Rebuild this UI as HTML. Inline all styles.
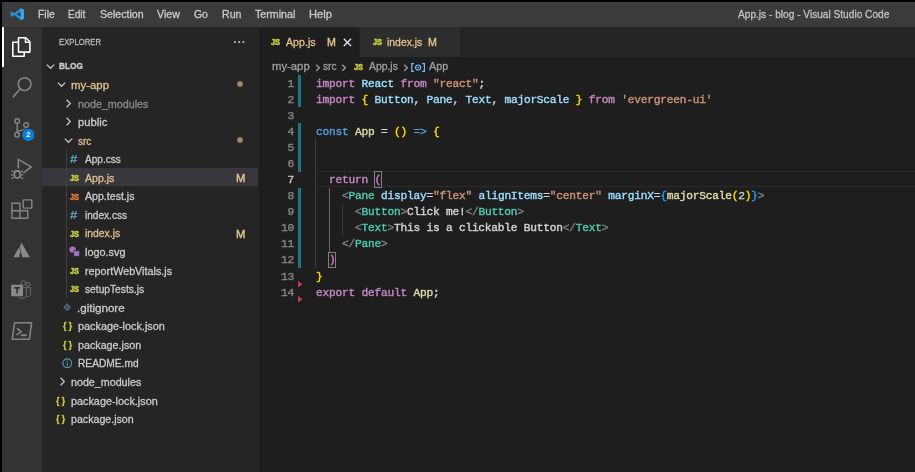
<!DOCTYPE html><html><head><meta charset="utf-8"><title>App.js - blog - Visual Studio Code</title><style>
*{box-sizing:border-box;margin:0;padding:0}
html,body{width:915px;height:472px;overflow:hidden;background:#000}
body{position:relative;font-family:"Liberation Sans",sans-serif;color:#ccc;font-size:11px}
.abs{position:absolute}
#w{position:absolute;left:0;top:0;width:915px;height:472px;will-change:transform}
#title{left:2px;top:2px;width:913px;height:24.5px;background:#3b3b3b}
#act{left:2px;top:26.5px;width:40.3px;height:446px;background:#333}
#side{left:42.3px;top:26.5px;width:216.4px;height:446px;background:#252526}
#ed{left:258.7px;top:26.5px;width:657px;height:446px;background:#1e1e1e}
#tabs{left:258.7px;top:26.5px;width:657px;height:30px;background:#252526}
.t{position:absolute;white-space:pre;transform-origin:0 50%}
.code,.ln{font-family:"Liberation Mono",monospace;font-size:11.2px;letter-spacing:-0.22px;white-space:pre;position:absolute;line-height:12px;-webkit-text-stroke:0.4px}
.code{color:#d4d4d4}
.ln{color:#858585;text-align:right;width:30px}
.k{color:#c586c0}.c{color:#569cd6}.v{color:#9cdcfe}.f{color:#dcdcaa}.s{color:#ce9178}
.b1{color:#ffd700}.b2{color:#da70d6}.b3{color:#179fff}.g{color:#808080}.tg{color:#4ec9b0}.n{color:#b5cea8}
</style></head><body><div id="w">
<div class="abs" id="title"></div><div class="abs" id="act"></div><div class="abs" id="side"></div><div class="abs" id="ed"></div><div class="abs" id="tabs"></div>
<svg class="abs" style="left:9.5px;top:7.8px" width="14.5" height="12.4" viewBox="0 0 100 100" preserveAspectRatio="none"><path d="M74 3 L96 14 V86 L74 97 L30 57 L12 71 L4 66 V34 L12 29 L30 43 Z M74 30 L44 50 L74 70 Z" fill="#2793dd" fill-rule="evenodd"/><path d="M74 3 L96 14 V86 L74 97 Z" fill="#36a6ee"/></svg>
<div class="t" style="left:37.80px;top:8.18px;font-size:11.6px;line-height:11.6px;color:#cdcdcd;transform:scaleX(0.8940);-webkit-text-stroke:0.3px;">File</div>
<div class="t" style="left:67.90px;top:8.18px;font-size:11.6px;line-height:11.6px;color:#cdcdcd;transform:scaleX(0.8720);-webkit-text-stroke:0.3px;">Edit</div>
<div class="t" style="left:100.00px;top:8.18px;font-size:11.6px;line-height:11.6px;color:#cdcdcd;transform:scaleX(0.9144);-webkit-text-stroke:0.3px;">Selection</div>
<div class="t" style="left:157.30px;top:8.18px;font-size:11.6px;line-height:11.6px;color:#cdcdcd;transform:scaleX(0.9160);-webkit-text-stroke:0.3px;">View</div>
<div class="t" style="left:194.20px;top:8.18px;font-size:11.6px;line-height:11.6px;color:#cdcdcd;transform:scaleX(0.8989);-webkit-text-stroke:0.3px;">Go</div>
<div class="t" style="left:221.60px;top:8.18px;font-size:11.6px;line-height:11.6px;color:#cdcdcd;transform:scaleX(0.9174);-webkit-text-stroke:0.3px;">Run</div>
<div class="t" style="left:254.90px;top:8.18px;font-size:11.6px;line-height:11.6px;color:#cdcdcd;transform:scaleX(0.9206);-webkit-text-stroke:0.3px;">Terminal</div>
<div class="t" style="left:308.80px;top:8.18px;font-size:11.6px;line-height:11.6px;color:#cdcdcd;transform:scaleX(0.9617);-webkit-text-stroke:0.3px;">Help</div>
<div class="t" style="left:737.50px;top:8.18px;font-size:11.6px;line-height:11.6px;color:#c4c4c4;transform:scaleX(0.8738);-webkit-text-stroke:0.3px;">App.js - blog - Visual Studio Code</div>
<div class="abs" style="left:2px;top:26.5px;width:1.7px;height:40.3px;background:#fff"></div>
<svg class="abs" style="left:2px;top:26px" width="41" height="330" viewBox="2 26 41 330" fill="none" stroke-linejoin="round" stroke-linecap="round">
<g stroke="#ffffff" stroke-width="1.55">
<path d="M18.5 50 V37.7 H25.8 L29.9 41.8 V52.1 H18.5 Z"/>
<path d="M25.4 38 V42.3 H29.6" stroke-width="1.4"/>
<path d="M18 42.2 H12.8 V56.2 H24.2 V52.6"/>
</g>
<g stroke="#868686" stroke-width="1.6">
<circle cx="24.6" cy="84.1" r="6.4"/>
<path d="M19.9 89.2 L13.3 96.8"/>
</g>
<g stroke="#868686" stroke-width="1.4">
<circle cx="17.2" cy="121.1" r="2.3"/>
<circle cx="26.1" cy="124.9" r="2.3"/>
<circle cx="17.1" cy="134.8" r="2.3"/>
<path d="M17.2 123.6 V132.3 M26.1 127.4 C26.1 130.4 21 130.2 17.3 131.2"/>
</g>
<circle cx="28.4" cy="134.9" r="6.6" fill="#0a7fd6" stroke="#2b2b2b" stroke-width="0.8"/>
<g stroke="#868686" stroke-width="1.5">
<path d="M18.3 168 V159.3 L31.3 166.9 L23.8 172.6"/>
</g>
<g stroke="#868686" stroke-width="1.2">
<ellipse cx="17.2" cy="174.5" rx="2.8" ry="3.6" stroke-width="1.6"/>
<path d="M14.2 172.6 L11.8 171 M14 174.8 H11.4 M14.2 177 L11.8 178.6 M20.2 172.6 L22.6 171 M20.4 174.8 H23 M20.2 177 L22.6 178.6 M15.2 170.6 L19.2 170.6"/>
</g>
<g stroke="#868686" stroke-width="1.4">
<path d="M11.9 203.3 H19.9 V218.3 H11.9 Z M11.9 210.8 H27.7 V218.3 H19.9"/>
<rect x="23.2" y="199.9" width="8.6" height="8.2" rx="0.8"/>
</g>
<g fill="#8a8a8a" stroke="none">
<path d="M13.4 257.3 L19.0 247.2 L20.4 251.6 L19.2 257.3 Z"/>
<path d="M21.4 242.4 L29.9 257.3 L22.3 257.3 L19.8 247.0 Z"/>
</g>
<g>
<rect x="11.2" y="284.8" width="11.8" height="11.4" rx="0.8" fill="#8a8a8a"/>
<path d="M14.2 287.8 H20 M17.1 287.8 V293.6" stroke="#333333" stroke-width="1.7" stroke-linecap="butt"/>
<g stroke="#6e6e6e" stroke-width="1">
<circle cx="23.4" cy="283" r="2.4"/>
<circle cx="28" cy="284.4" r="1.9"/>
<path d="M23.6 287.6 H26.4 V294.6 C26.4 298.4 21.4 299.6 19 297"/>
<path d="M27 287.6 H30.6 V293.4 C30.6 296.4 28 297 26.6 296.4"/>
</g>
</g>
<g stroke="#868686" stroke-width="1.5">
<path d="M14.6 322.8 H31.6 L29.4 339.2 H12.2 Z"/>
<path d="M17.4 328.6 L21.2 331.6 L17 334.6"/>
<path d="M21.6 335.2 H26" stroke-width="1.9"/>
</g>
</svg>
<div class="t" style="left:26.3px;top:131.2px;font-size:7.6px;line-height:7.6px;font-weight:bold;color:#fff">2</div>

<div class="t" style="left:58.90px;top:36.94px;font-size:9.4px;line-height:9.4px;color:#bbbbbb;transform:scaleX(0.8247);-webkit-text-stroke:0.3px;">EXPLORER</div>
<div class="abs" style="left:233.5px;top:40.8px;width:2px;height:2px;border-radius:50%;background:#c5c5c5;box-shadow:4.2px 0 0 #c5c5c5,8.4px 0 0 #c5c5c5"></div>
<svg class="abs" style="left:46.00px;top:61.80px" width="9" height="9" viewBox="0 0 9 9"><path d="M0.8 2.6 L4.5 6.3 L8.2 2.6" fill="none" stroke="#c5c5c5" stroke-width="1.30"/></svg>
<div class="t" style="left:58.90px;top:61.19px;font-size:9.7px;line-height:9.7px;color:#cccccc;transform:scaleX(0.8598);font-weight:bold;-webkit-text-stroke:0.3px;">BLOG</div>
<div class="abs" style="left:42.3px;top:167.81px;width:216px;height:18.57px;background:#37373d"></div>
<div class="abs" style="left:66.1px;top:149.50px;width:1px;height:148.56px;background:#404041"></div>
<div class="t" style="left:71.10px;top:79.93px;font-size:11.3px;line-height:11.3px;color:#e2c08d;transform:scaleX(1.0084);-webkit-text-stroke:0.3px;">my-app</div>
<svg class="abs" style="left:57.00px;top:80.40px" width="9" height="9" viewBox="0 0 9 9"><path d="M0.8 2.6 L4.5 6.3 L8.2 2.6" fill="none" stroke="#c5c5c5" stroke-width="1.30"/></svg>
<div class="abs" style="left:237.1px;top:80.90px;width:6.2px;height:6.2px;border-radius:50%;background:radial-gradient(#a8946f 30%,#85745a 75%)"></div>
<div class="t" style="left:77.60px;top:98.50px;font-size:11.3px;line-height:11.3px;color:#8c8c8c;transform:scaleX(0.9508);-webkit-text-stroke:0.3px;">node_modules</div>
<svg class="abs" style="left:64.10px;top:98.87px" width="9" height="9" viewBox="0 0 9 9"><path d="M2.6 0.8 L6.3 4.5 L2.6 8.2" fill="none" stroke="#c5c5c5" stroke-width="1.30"/></svg>
<div class="t" style="left:77.60px;top:117.07px;font-size:11.3px;line-height:11.3px;color:#cccccc;transform:scaleX(0.9944);-webkit-text-stroke:0.3px;">public</div>
<svg class="abs" style="left:64.10px;top:117.44px" width="9" height="9" viewBox="0 0 9 9"><path d="M2.6 0.8 L6.3 4.5 L2.6 8.2" fill="none" stroke="#c5c5c5" stroke-width="1.30"/></svg>
<div class="t" style="left:77.60px;top:135.64px;font-size:11.3px;line-height:11.3px;color:#e2c08d;transform:scaleX(0.8825);-webkit-text-stroke:0.3px;">src</div>
<svg class="abs" style="left:63.50px;top:136.11px" width="9" height="9" viewBox="0 0 9 9"><path d="M0.8 2.6 L4.5 6.3 L8.2 2.6" fill="none" stroke="#c5c5c5" stroke-width="1.30"/></svg>
<div class="abs" style="left:237.1px;top:136.61px;width:6.2px;height:6.2px;border-radius:50%;background:radial-gradient(#a8946f 30%,#85745a 75%)"></div>
<div class="t" style="left:84.60px;top:154.21px;font-size:11.3px;line-height:11.3px;color:#cccccc;transform:scaleX(0.8930);-webkit-text-stroke:0.3px;">App.css</div>
<div class="t" style="left:70.00px;top:154.29px;font-size:10.5px;line-height:10.5px;color:#519aba;transform:scaleX(1.2667);font-weight:bold;-webkit-text-stroke:0.2px;">#</div>
<div class="t" style="left:84.60px;top:172.78px;font-size:11.3px;line-height:11.3px;color:#e2c08d;transform:scaleX(0.9355);-webkit-text-stroke:0.3px;">App.js</div>
<div class="t" style="left:69.60px;top:173.05px;font-size:9.8px;line-height:9.8px;color:#cbcb41;transform:scaleX(0.7551);font-weight:bold;-webkit-text-stroke:0.6px;">JS</div>
<div class="t" style="left:236.20px;top:173.04px;font-size:11px;line-height:11px;color:#e2c08d;transform:scaleX(1.0222);-webkit-text-stroke:0.45px;">M</div>
<div class="t" style="left:84.60px;top:191.35px;font-size:11.3px;line-height:11.3px;color:#cccccc;transform:scaleX(0.9379);-webkit-text-stroke:0.3px;">App.test.js</div>
<div class="t" style="left:69.60px;top:191.62px;font-size:9.8px;line-height:9.8px;color:#e37933;transform:scaleX(0.7551);font-weight:bold;-webkit-text-stroke:0.6px;">JS</div>
<div class="t" style="left:84.60px;top:209.92px;font-size:11.3px;line-height:11.3px;color:#cccccc;transform:scaleX(0.8916);-webkit-text-stroke:0.3px;">index.css</div>
<div class="t" style="left:70.00px;top:210.00px;font-size:10.5px;line-height:10.5px;color:#519aba;transform:scaleX(1.2667);font-weight:bold;-webkit-text-stroke:0.2px;">#</div>
<div class="t" style="left:84.60px;top:228.49px;font-size:11.3px;line-height:11.3px;color:#e2c08d;transform:scaleX(0.9184);-webkit-text-stroke:0.3px;">index.js</div>
<div class="t" style="left:69.60px;top:228.76px;font-size:9.8px;line-height:9.8px;color:#cbcb41;transform:scaleX(0.7551);font-weight:bold;-webkit-text-stroke:0.6px;">JS</div>
<div class="t" style="left:236.20px;top:228.75px;font-size:11px;line-height:11px;color:#e2c08d;transform:scaleX(1.0222);-webkit-text-stroke:0.45px;">M</div>
<div class="t" style="left:84.60px;top:247.06px;font-size:11.3px;line-height:11.3px;color:#cccccc;transform:scaleX(0.9619);-webkit-text-stroke:0.3px;">logo.svg</div>
<svg class="abs" style="left:68.80px;top:246.43px" width="11.4" height="11" viewBox="0 0 11.4 11"><circle cx="3.6" cy="3.6" r="3.2" fill="#a074c4"/><rect x="4.6" y="4.6" width="6" height="5.8" rx="0.6" fill="#a074c4" stroke="#252526" stroke-width="0.8"/></svg>
<div class="t" style="left:84.60px;top:265.63px;font-size:11.3px;line-height:11.3px;color:#cccccc;transform:scaleX(0.9541);-webkit-text-stroke:0.3px;">reportWebVitals.js</div>
<div class="t" style="left:69.60px;top:265.90px;font-size:9.8px;line-height:9.8px;color:#cbcb41;transform:scaleX(0.7551);font-weight:bold;-webkit-text-stroke:0.6px;">JS</div>
<div class="t" style="left:84.60px;top:284.20px;font-size:11.3px;line-height:11.3px;color:#cccccc;transform:scaleX(0.9048);-webkit-text-stroke:0.3px;">setupTests.js</div>
<div class="t" style="left:69.60px;top:284.47px;font-size:9.8px;line-height:9.8px;color:#cbcb41;transform:scaleX(0.7551);font-weight:bold;-webkit-text-stroke:0.6px;">JS</div>
<div class="t" style="left:76.58px;top:302.77px;font-size:11.3px;line-height:11.3px;color:#cccccc;transform:scaleX(1.0246);-webkit-text-stroke:0.3px;">.gitignore</div>
<svg class="abs" style="left:63.20px;top:303.14px" width="8.4" height="8.4" viewBox="0 0 8 8"><rect x="1.3" y="1.3" width="5.4" height="5.4" transform="rotate(45 4 4)" fill="#4a6578"/><circle cx="4" cy="4" r="1" fill="#2b3a44"/></svg>
<div class="t" style="left:77.60px;top:321.34px;font-size:11.3px;line-height:11.3px;color:#cccccc;transform:scaleX(0.9596);-webkit-text-stroke:0.3px;">package-lock.json</div>
<div class="t" style="left:62.70px;top:322.22px;font-size:9.2px;line-height:9.2px;color:#cbcb41;transform:scaleX(0.9479);font-weight:bold;-webkit-text-stroke:0.3px;">{ }</div>
<div class="t" style="left:77.60px;top:339.91px;font-size:11.3px;line-height:11.3px;color:#cccccc;transform:scaleX(0.9489);-webkit-text-stroke:0.3px;">package.json</div>
<div class="t" style="left:62.70px;top:340.79px;font-size:9.2px;line-height:9.2px;color:#cbcb41;transform:scaleX(0.9479);font-weight:bold;-webkit-text-stroke:0.3px;">{ }</div>
<div class="t" style="left:77.60px;top:358.48px;font-size:11.3px;line-height:11.3px;color:#cccccc;transform:scaleX(0.9016);-webkit-text-stroke:0.3px;">README.md</div>
<svg class="abs" style="left:61.80px;top:357.65px" width="10.6" height="10.6" viewBox="0 0 10 10"><circle cx="5" cy="5" r="4.1" fill="none" stroke="#519aba" stroke-width="1.1"/><rect x="4.45" y="4.3" width="1.1" height="3" fill="#519aba"/><rect x="4.45" y="2.5" width="1.1" height="1.1" fill="#519aba"/></svg>
<div class="t" style="left:71.10px;top:377.05px;font-size:11.3px;line-height:11.3px;color:#cccccc;transform:scaleX(0.9481);-webkit-text-stroke:0.3px;">node_modules</div>
<svg class="abs" style="left:57.60px;top:377.42px" width="9" height="9" viewBox="0 0 9 9"><path d="M2.6 0.8 L6.3 4.5 L2.6 8.2" fill="none" stroke="#c5c5c5" stroke-width="1.30"/></svg>
<div class="t" style="left:71.10px;top:395.62px;font-size:11.3px;line-height:11.3px;color:#cccccc;transform:scaleX(0.9585);-webkit-text-stroke:0.3px;">package-lock.json</div>
<div class="t" style="left:56.20px;top:396.50px;font-size:9.2px;line-height:9.2px;color:#cbcb41;transform:scaleX(0.9479);font-weight:bold;-webkit-text-stroke:0.3px;">{ }</div>
<div class="t" style="left:71.10px;top:414.19px;font-size:11.3px;line-height:11.3px;color:#cccccc;transform:scaleX(0.9413);-webkit-text-stroke:0.3px;">package.json</div>
<div class="t" style="left:56.20px;top:415.07px;font-size:9.2px;line-height:9.2px;color:#cbcb41;transform:scaleX(0.9479);font-weight:bold;-webkit-text-stroke:0.3px;">{ }</div>
<div class="abs" style="left:258.7px;top:26.5px;width:100.5px;height:30px;background:#1e1e1e"></div>
<div class="abs" style="left:359.5px;top:26.5px;width:100.5px;height:30px;background:#2d2d2d"></div>
<div class="t" style="left:271.40px;top:37.00px;font-size:9.8px;line-height:9.8px;color:#cbcb41;transform:scaleX(0.7551);font-weight:bold;-webkit-text-stroke:0.6px;">JS</div>
<div class="t" style="left:285.50px;top:36.73px;font-size:11.3px;line-height:11.3px;color:#e2c08d;transform:scaleX(0.9418);-webkit-text-stroke:0.3px;">App.js</div>
<div class="t" style="left:326.90px;top:36.99px;font-size:11px;line-height:11px;color:#e2c08d;transform:scaleX(0.9667);-webkit-text-stroke:0.45px;">M</div>
<svg class="abs" style="left:342.9px;top:38.2px" width="8.8" height="8.8" viewBox="0 0 9 9"><path d="M0.8 0.8 L8.2 8.2 M8.2 0.8 L0.8 8.2" stroke="#e8e8e8" stroke-width="1.3" fill="none"/></svg>
<div class="t" style="left:372.60px;top:37.00px;font-size:9.8px;line-height:9.8px;color:#cbcb41;transform:scaleX(0.7551);font-weight:bold;-webkit-text-stroke:0.6px;">JS</div>
<div class="t" style="left:387.20px;top:36.73px;font-size:11.3px;line-height:11.3px;color:#e2c08d;transform:scaleX(0.9210);-webkit-text-stroke:0.3px;">index.js</div>
<div class="t" style="left:428.30px;top:36.99px;font-size:11px;line-height:11px;color:#e2c08d;transform:scaleX(0.9667);-webkit-text-stroke:0.45px;">M</div>
<div class="t" style="left:272.20px;top:61.43px;font-size:11.3px;line-height:11.3px;color:#a0a0a0;transform:scaleX(1.0004);-webkit-text-stroke:0.3px;">my-app</div>
<svg class="abs" style="left:313.60px;top:63.80px" width="7.6" height="7.6" viewBox="0 0 9 9"><path d="M2.6 0.8 L6.3 4.5 L2.6 8.2" fill="none" stroke="#a0a0a0" stroke-width="1.54"/></svg>
<div class="t" style="left:323.40px;top:61.43px;font-size:11.3px;line-height:11.3px;color:#a0a0a0;transform:scaleX(0.8955);-webkit-text-stroke:0.3px;">src</div>
<svg class="abs" style="left:340.40px;top:63.80px" width="7.6" height="7.6" viewBox="0 0 9 9"><path d="M2.6 0.8 L6.3 4.5 L2.6 8.2" fill="none" stroke="#a0a0a0" stroke-width="1.54"/></svg>
<div class="t" style="left:354.30px;top:61.70px;font-size:9.8px;line-height:9.8px;color:#cbcb41;transform:scaleX(0.7551);font-weight:bold;-webkit-text-stroke:0.6px;">JS</div>
<div class="t" style="left:369.30px;top:61.43px;font-size:11.3px;line-height:11.3px;color:#a0a0a0;transform:scaleX(0.9197);-webkit-text-stroke:0.3px;">App.js</div>
<svg class="abs" style="left:401.50px;top:63.80px" width="7.6" height="7.6" viewBox="0 0 9 9"><path d="M2.6 0.8 L6.3 4.5 L2.6 8.2" fill="none" stroke="#a0a0a0" stroke-width="1.54"/></svg>
<svg class="abs" style="left:411.3px;top:63.10px" width="14.2" height="9" viewBox="0 0 14.2 9"><path d="M3 0.6 H0.8 V8.4 H3 M11.2 0.6 H13.4 V8.4 H11.2" fill="none" stroke="#75beff" stroke-width="1.2"/><circle cx="7.1" cy="4.5" r="2.5" fill="none" stroke="#75beff" stroke-width="1.2"/><circle cx="7.1" cy="4.5" r="0.8" fill="#75beff"/></svg>
<div class="t" style="left:429.00px;top:61.43px;font-size:11.3px;line-height:11.3px;color:#a0a0a0;transform:scaleX(0.9587);-webkit-text-stroke:0.3px;">App</div>
<div class="abs" style="left:298.2px;top:75.30px;width:2.6px;height:32.08px;background:#1d7489"></div>
<div class="abs" style="left:298.2px;top:123.42px;width:2.6px;height:48.12px;background:#1d7489"></div>
<div class="abs" style="left:298.2px;top:187.58px;width:2.6px;height:80.20px;background:#1d7489"></div>
<svg class="abs" style="left:298.0px;top:281.22px" width="4.8" height="6.4" viewBox="0 0 5 7"><path d="M0 0 L4.6 3.5 L0 7 Z" fill="#cc3e48"/></svg>
<svg class="abs" style="left:298.0px;top:296.46px" width="4.8" height="6.4" viewBox="0 0 5 7"><path d="M0 0 L4.6 3.5 L0 7 Z" fill="#cc3e48"/></svg>
<div class="abs" style="left:316px;top:170.84px;width:599px;height:16.44px;border-top:1.5px solid #2a2a2a;border-bottom:1.5px solid #2a2a2a"></div>
<div class="abs" style="left:315.0px;top:139.46px;width:1px;height:128.32px;background:#404040"></div>
<div class="abs" style="left:328.8px;top:187.58px;width:1px;height:64.16px;background:#686868"></div>
<div class="abs" style="left:342.0px;top:203.62px;width:1px;height:32.08px;background:#3a3a3a"></div>
<div class="ln" style="left:264px;top:78.02px;">1</div>
<div class="code" style="left:316.0px;top:78.02px"><span class="k">import</span> <span class="v">React</span> <span class="k">from</span> <span class="s">"react"</span>;</div>
<div class="ln" style="left:264px;top:94.06px;">2</div>
<div class="code" style="left:316.0px;top:94.06px"><span class="k">import</span> <span class="b1">{</span> <span class="v">Button</span>, <span class="v">Pane</span>, <span class="v">Text</span>, <span class="v">majorScale</span> <span class="b1">}</span> <span class="k">from</span> <span class="s">'evergreen-ui'</span></div>
<div class="ln" style="left:264px;top:110.10px;">3</div>
<div class="ln" style="left:264px;top:126.14px;">4</div>
<div class="code" style="left:316.0px;top:126.14px"><span class="c">const</span> <span class="f">App</span> = <span class="b1">()</span> <span class="c">=&gt;</span> <span class="b1">{</span></div>
<div class="ln" style="left:264px;top:142.18px;">5</div>
<div class="ln" style="left:264px;top:158.22px;">6</div>
<div class="ln" style="left:264px;top:174.26px;color:#c6c6c6;">7</div>
<div class="code" style="left:316.0px;top:174.26px">  <span class="k">return</span> <span class="b2">(</span></div>
<div class="ln" style="left:264px;top:190.30px;">8</div>
<div class="code" style="left:316.0px;top:190.30px">    <span class="g">&lt;</span><span class="tg">Pane</span> <span class="v">display</span>=<span class="s">"flex"</span> <span class="v">alignItems</span>=<span class="s">"center"</span> <span class="v">marginX</span>=<span class="b3">{</span><span class="f">majorScale</span><span class="b1">(</span><span class="n">2</span><span class="b1">)</span><span class="b3">}</span><span class="g">&gt;</span></div>
<div class="ln" style="left:264px;top:206.34px;">9</div>
<div class="code" style="left:316.0px;top:206.34px">      <span class="g">&lt;</span><span class="tg">Button</span><span class="g">&gt;</span>Click me!<span class="g">&lt;/</span><span class="tg">Button</span><span class="g">&gt;</span></div>
<div class="ln" style="left:264px;top:222.38px;">10</div>
<div class="code" style="left:316.0px;top:222.38px">      <span class="g">&lt;</span><span class="tg">Text</span><span class="g">&gt;</span>This is a clickable Button<span class="g">&lt;/</span><span class="tg">Text</span><span class="g">&gt;</span></div>
<div class="ln" style="left:264px;top:238.42px;">11</div>
<div class="code" style="left:316.0px;top:238.42px">    <span class="g">&lt;/</span><span class="tg">Pane</span><span class="g">&gt;</span></div>
<div class="ln" style="left:264px;top:254.46px;">12</div>
<div class="code" style="left:316.0px;top:254.46px">  <span class="b2">)</span></div>
<div class="ln" style="left:264px;top:270.50px;">13</div>
<div class="code" style="left:316.0px;top:270.50px"><span class="b1">}</span></div>
<div class="ln" style="left:264px;top:286.54px;">14</div>
<div class="code" style="left:316.0px;top:286.54px"><span class="k">export</span> <span class="k">default</span> <span class="f">App</span>;</div>
<div class="abs" style="left:373.90px;top:171.34px;width:7.7px;height:16.34px;border:1px solid #808080"></div>
<div class="abs" style="left:328.40px;top:251.54px;width:7.7px;height:16.34px;border:1px solid #808080"></div>
</div></body></html>
